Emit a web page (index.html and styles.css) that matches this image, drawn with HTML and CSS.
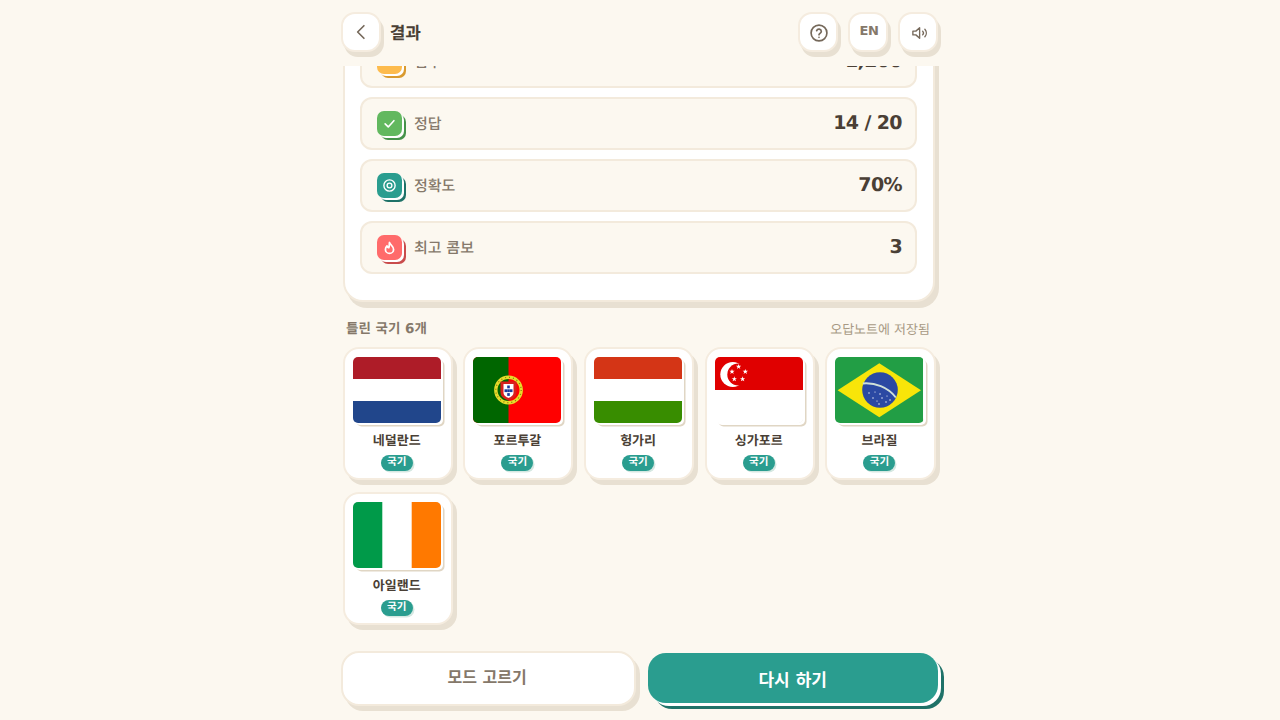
FILE: index.html
```html
<!DOCTYPE html>
<html lang="ko">
<head>
<meta charset="utf-8">
<title>결과</title>
<link rel="stylesheet" href="styles.css">
</head>
<body>
<div class="app">
  <header class="top">
    <button class="tbtn"><svg width="20" height="20" viewBox="0 0 24 24" fill="none" stroke="#75685a" stroke-width="2" stroke-linecap="round" stroke-linejoin="round"><path d="M15.500 4.500L8 12l7.500 7.500"/></svg></button>
    <h1 class="title">결과</h1>
    <div class="top-right">
      <button class="tbtn shifted"><svg width="20" height="20" viewBox="0 0 24 24" fill="none" stroke="#75685a" stroke-width="2" stroke-linecap="round" stroke-linejoin="round"><circle cx="12" cy="12" r="9.500"/><path d="M9.200 9.200a2.900 2.900 0 0 1 5.600 1c0 1.900-2.800 2.400-2.800 3.800"/><path d="M12 17.200h.01"/></svg></button>
      <button class="tbtn lang">EN</button>
      <button class="tbtn shifted wide"><svg width="18" height="18" viewBox="0 0 24 24" fill="none" stroke="#75685a" stroke-width="1.800" stroke-linecap="round" stroke-linejoin="round"><path d="M11.500 5L6.500 9.500H2.500v5h4l5 4.500z"/><path d="M15.500 9.500a3.600 3.600 0 0 1 0 5"/><path d="M18.500 7a7.500 7.500 0 0 1 0 10"/></svg></button>
    </div>
  </header>
  <main class="scroll">
    <section class="card">
      <div class="row"><span class="ico yellow"></span><span class="lbl">점수</span><b class="val">1,200</b></div>
      <div class="row"><span class="ico green"><svg width="15" height="15" viewBox="0 0 24 24" fill="none" stroke="#fff" stroke-width="2.600" stroke-linecap="round" stroke-linejoin="round"><path d="M5 12.500l5 5 9-10"/></svg></span><span class="lbl">정답</span><b class="val">14 / 20</b></div>
      <div class="row"><span class="ico teal"><svg width="15" height="15" viewBox="0 0 24 24" fill="none" stroke="#fff" stroke-width="2.200"><circle cx="12" cy="12" r="9"/><circle cx="12" cy="12" r="3.800"/></svg></span><span class="lbl">정확도</span><b class="val">70%</b></div>
      <div class="row"><span class="ico red"><svg width="15" height="15" viewBox="0 0 24 24" fill="none" stroke="#fff" stroke-width="2.800" stroke-linecap="round" stroke-linejoin="round"><path d="M12 4c1 3.500 6.500 6 6.500 11a6.500 6.500 0 0 1-13 0c0-2.500 1-4 2.500-5.500.4 1.800 1.300 2.700 2.800 2.900C12.200 9.500 11.400 7 12 4z"/></svg></span><span class="lbl">최고 콤보</span><b class="val">3</b></div>
    </section>
    <div class="sec-head"><h2 class="sec-title">틀린 국기 6개</h2><span class="sec-note">오답노트에 저장됨</span></div>
    <div class="grid">
      <article class="fcard">
        <svg class="flag" viewBox="0 0 88 66" preserveAspectRatio="none"><rect width="88" height="22" fill="#ae1c28"/><rect y="22" width="88" height="22" fill="#fff"/><rect y="44" width="88" height="22" fill="#21468b"/></svg>
        <div class="name">네덜란드</div><span class="tag">국기</span>
      </article>
      <article class="fcard">
        <svg class="flag" viewBox="0 0 88 66" preserveAspectRatio="none"><rect width="88" height="66" fill="#f00"/><rect width="35.500" height="66" fill="#060"/><circle cx="35.500" cy="33" r="12.700" fill="none" stroke="#e6dc2a" stroke-width="3.400"/><circle cx="35.500" cy="33" r="12.700" fill="none" stroke="#8a7a10" stroke-width="1.200" stroke-dasharray="1 3"/><path d="M27.500 24.500h16V35c0 5-4 7-8 8.500-4-1.500-8-3.500-8-8.500z" fill="#d8201c"/><path d="M30.500 27h10v8.500c0 3-2.500 4.500-5 5.500-2.500-1-5-2.500-5-5.500z" fill="#fff"/><g fill="#1a3a9c"><rect x="34.200" y="28.500" width="2.600" height="2.800"/><rect x="31.500" y="32.300" width="2.600" height="2.800"/><rect x="34.200" y="32.300" width="2.600" height="2.800"/><rect x="36.900" y="32.300" width="2.600" height="2.800"/><rect x="34.200" y="36.100" width="2.600" height="2.800"/></g></svg>
        <div class="name">포르투갈</div><span class="tag">국기</span>
      </article>
      <article class="fcard">
        <svg class="flag" viewBox="0 0 88 66" preserveAspectRatio="none"><rect width="88" height="22" fill="#d43516"/><rect y="22" width="88" height="22" fill="#fff"/><rect y="44" width="88" height="22" fill="#388d00"/></svg>
        <div class="name">헝가리</div><span class="tag">국기</span>
      </article>
      <article class="fcard">
        <svg class="flag" viewBox="0 0 88 66" preserveAspectRatio="none"><defs><path id="st" d="M0-2.800.65-.85H2.700L1.050.35l.65 2L0 1.150-1.700 2.350l.65-2L-2.700-.85H-.65z"/></defs><rect width="88" height="33" fill="#e00000"/><rect y="33" width="88" height="33" fill="#fff"/><circle cx="17.800" cy="17.500" r="12.500" fill="#fff"/><circle cx="23.300" cy="17.500" r="11" fill="#e00000"/><g fill="#fff"><use href="#st" x="23.600" y="9.700"/><use href="#st" x="17" y="14.700"/><use href="#st" x="30.300" y="14.700"/><use href="#st" x="19.300" y="22"/><use href="#st" x="27.600" y="22"/></g></svg>
        <div class="name">싱가포르</div><span class="tag">국기</span>
      </article>
      <article class="fcard">
        <svg class="flag" viewBox="0 0 88 66" preserveAspectRatio="none"><rect width="88" height="66" fill="#229e45"/><path d="M44.300 6.300L86 33.300 44.300 60.300 2.600 33.300z" fill="#f8e509"/><circle cx="45" cy="33" r="17.800" fill="#2b49a3"/><path d="M27.800 26.500c12-1 25 3.500 33 14" fill="none" stroke="#cfe0d8" stroke-width="2"/><g fill="#fff"><circle cx="34" cy="36" r=".7"/><circle cx="38" cy="41" r=".7"/><circle cx="45" cy="37" r=".7"/><circle cx="47" cy="41" r=".7"/><circle cx="51" cy="45" r=".7"/><circle cx="55" cy="43" r=".7"/><circle cx="44" cy="47" r=".7"/><circle cx="40" cy="35" r=".6"/><circle cx="52" cy="39" r=".6"/><circle cx="42" cy="44" r=".6"/></g></svg>
        <div class="name">브라질</div><span class="tag">국기</span>
      </article>
      <article class="fcard">
        <svg class="flag" viewBox="0 0 88 66" preserveAspectRatio="none"><rect width="30" height="66" fill="#009a49"/><rect x="29.300" width="29.600" height="66" fill="#fff"/><rect x="58.700" width="29.300" height="66" fill="#ff7900"/></svg>
        <div class="name">아일랜드</div><span class="tag">국기</span>
      </article>
    </div>
  </main>
  <footer class="foot">
    <button class="bbtn ghost">모드 고르기</button>
    <button class="bbtn primary">다시 하기</button>
  </footer>
</div>
</body>
</html>
```
FILE: styles.css
```css
* { box-sizing: border-box; }
html, body { margin: 0; height: 100%; }
body {
  background: #fcf8f0;
  font-family: "DejaVu Sans", "Noto Sans CJK KR", sans-serif;
  color: #4a3f35;
  overflow: hidden;
  text-rendering: geometricPrecision;
}
button { font-family: inherit; padding: 0; cursor: pointer; }
.app {
  width: 600px;
  height: 720px;
  margin: 0 auto;
  display: flex;
  flex-direction: column;
}
.top {
  flex: 0 0 66px;
  display: flex;
  align-items: flex-start;
  padding: 11.700px 2px 0 .7px;
  background: #fcf8f0;
}
.tbtn {
  width: 40px;
  height: 40px;
  display: flex;
  align-items: center;
  justify-content: center;
  background: #fff;
  border: 2px solid #f5ecdf;
  border-radius: 14px;
  box-shadow: 3px 5px 0 #e8e0d2;
}
.shifted { padding: 2px 0 0 1px; }
.wide { padding-left: 3px; }
.title { margin: 0 0 0 9px; padding-top: 2px; font-size: 17px; line-height: 40px; font-weight: 700; color: #4a3f35; }
.top-right { margin-left: auto; display: flex; gap: 10px; }
.lang { font-size: 13px; letter-spacing: -.4px; font-weight: 700; color: #85786a; padding: 0 0 3px 2px; }
.scroll { flex: 1; min-height: 0; overflow: hidden; padding: 0 5px 0 3px; }
.card {
  margin-top: -49px;
  background: #fff;
  border: 2px solid #f3eadc;
  border-radius: 20px;
  padding: 16px 16px 26px 15px;
  box-shadow: 4px 6px 0 #e8e0d2;
  display: flex;
  flex-direction: column;
  gap: 9px;
}
.row {
  height: 53px;
  display: flex;
  align-items: center;
  padding: 0 13px 0 15px;
  background: #fcf8f0;
  border: 2px solid #f3eadc;
  border-radius: 12px;
}
.ico {
  width: 25px;
  height: 25px;
  display: flex;
  align-items: center;
  justify-content: center;
  border-radius: 7px;
  box-shadow: 2px 2px 0 #fff, 4px 4px 0 var(--edge);
}
.yellow { background: #fdbb4d; --edge: #d99a2f; }
.green { background: #62b85f; --edge: #46924a; }
.teal { background: #2a9d8f; --edge: #1f7268; }
.red { background: #ff6b6b; --edge: #c94c4c; }
.lbl { margin-left: 12px; padding-bottom: 1px; font-size: 15px; font-weight: 500; color: #85786a; }
.val { margin-left: auto; padding-bottom: 1px; font-size: 19px; letter-spacing: -.6px; font-weight: 700; color: #4a3f35; }
.sec-head {
  display: flex;
  justify-content: space-between;
  align-items: center;
  margin-top: 13px;
  padding: 0 5px 0 3px;
  height: 24px;
}
.sec-title { margin: 0; font-size: 13.500px; font-weight: 700; color: #85786a; }
.sec-note { font-size: 13px; color: #a89a85; padding-top: 3px; }
.grid {
  display: grid;
  grid-template-columns: repeat(5, 1fr);
  gap: 12px 10.700px;
  margin: 8px -.5px 0 -.3px;
}
.fcard {
  height: 133px;
  padding: 7.500px 10px 0 8px;
  background: #fff;
  border: 2px solid #f5ecdf;
  border-radius: 16px;
  box-shadow: 4px 5px 0 #e8e0d2;
  display: flex;
  flex-direction: column;
  align-items: center;
}
.flag {
  display: block;
  flex: none;
  width: 100%;
  height: 66px;
  border-radius: 5px;
  box-shadow: 2px 2px 0 #fff, 3.500px 3.500px 0 #e0d6c4;
}
.name { margin-top: 10px; font-size: 13px; line-height: 18px; font-weight: 700; color: #4a3f35; }
.tag {
  margin-top: 4px;
  flex: none;
  width: 32px;
  height: 16px;
  border-radius: 8px;
  background: #2a9d8f;
  box-shadow: 1.500px 1.500px 0 #d5e8e2;
  color: #fff;
  font-size: 10.500px;
  font-weight: 700;
  line-height: 15px;
  text-align: center;
}
.foot {
  flex: 0 0 auto;
  display: flex;
  gap: 12px;
  height: 80px;
  padding: 11px 0 0 .7px;
  align-items: flex-start;
}
.bbtn { flex: none; font-weight: 700; border-radius: 18px; }
.ghost {
  width: 295px;
  height: 55px;
  font-size: 16px;
  background: #fff;
  color: #85786a;
  border: 2px solid #f3eadc;
  box-shadow: 4px 5px 0 #e8e0d2;
  padding: 0 2px 5px 0;
}
.primary {
  width: 290px;
  height: 50px;
  margin-top: 2px;
  font-size: 17px;
  background: #2a9d8f;
  color: #fff;
  border: 0;
  box-shadow: 3px 3px 0 #fff, 6px 6px 0 #1f7268;
}
```
